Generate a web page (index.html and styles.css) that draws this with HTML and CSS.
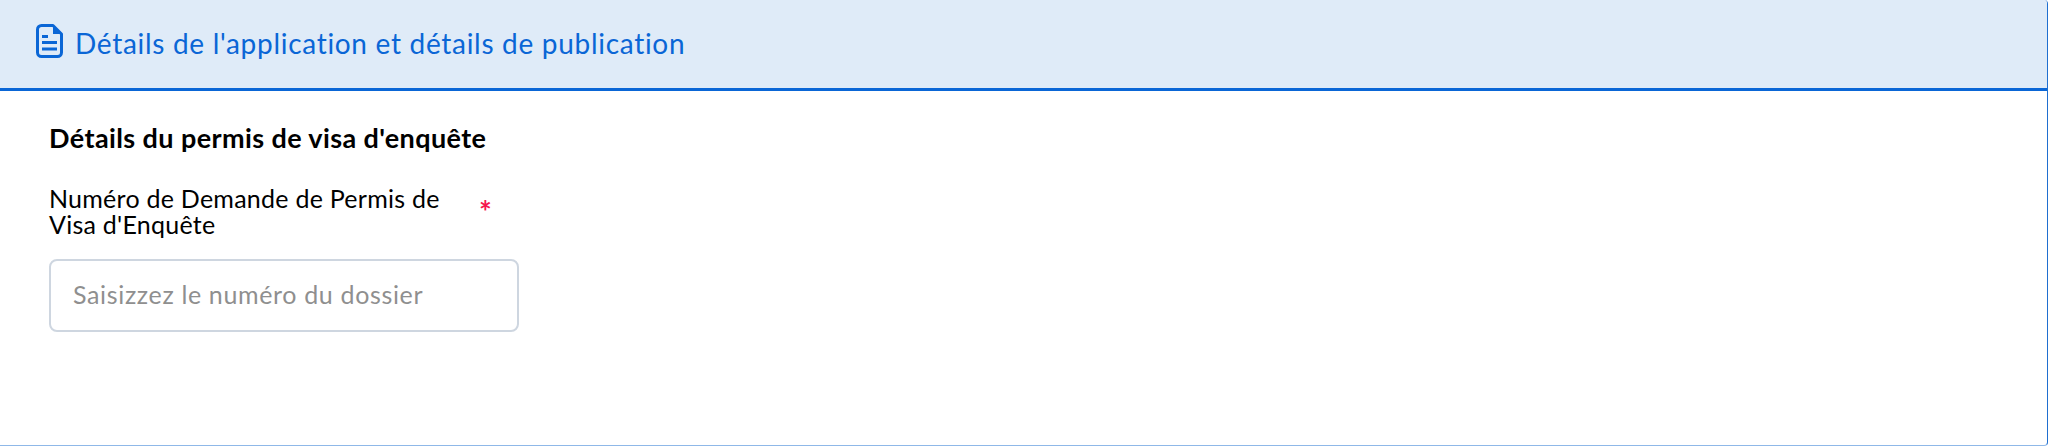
FILE: index.html
```html
<!DOCTYPE html>
<html lang="fr">
<head>
<meta charset="utf-8">
<title>Détails de l'application</title>
<link rel="stylesheet" href="styles.css">
</head>
<body>
<section class="panel">
  <header class="panel-head">
    <svg class="doc-icon" width="27" height="34" viewBox="0 0 27 34" fill="none">
      <path d="M5.500 1.500H17L25.500 10V28.500A4 4 0 0 1 21.500 32.500H5.500A4 4 0 0 1 1.500 28.500V5.500A4 4 0 0 1 5.500 1.500Z" stroke="#0a66d6" stroke-width="3" stroke-linejoin="round"/>
      <path d="M17 2V10H25Z" fill="#0a66d6"/>
      <path d="M6 12.500H12M6 18.500H21M6 25H21" stroke="#0a66d6" stroke-width="3"/>
    </svg>
    <h1 class="panel-title">Détails de l'application et détails de publication</h1>
  </header>
  <div class="panel-body">
    <h2 class="section-title">Détails du permis de visa d'enquête</h2>
    <div class="label-row">
      <label class="field-label" for="num">Numéro de Demande de Permis de Visa d'Enquête</label>
      <span class="required">*</span>
    </div>
    <input class="field-input" id="num" type="text" placeholder="Saisizzez le numéro du dossier">
  </div>
</section>
</body>
</html>
```
FILE: styles.css
```css
* { box-sizing: border-box; }
html, body { margin: 0; height: 100%; }
body { font-family: "Lato", "Open Sans", sans-serif; background: #fff; color: #000; }
.panel {
  height: 446px;
  display: flex;
  flex-direction: column;
  border-right: 1px solid #1f6fd0;
  border-bottom: 1px solid #8fb8e8;
  border-radius: 0 4px 4px 0;
  overflow: hidden;
}
.panel-head {
  height: 91px;
  flex: none;
  display: flex;
  align-items: center;
  gap: 12px;
  padding: 0 0 3px 36px;
  background: #dfebf8;
  border-bottom: 3px solid #0a66d6;
}
.doc-icon { flex: none; margin-top: -4px; }
.panel-title { margin: 0; font-size: 28px; font-weight: 400; color: #0a66d6; letter-spacing: 0.7px; }
.panel-body { padding: 32px 0 0 49px; }
.section-title { margin: 0; font-size: 27px; line-height: 30px; font-weight: 700; letter-spacing: 0.4px; }
.label-row { display: flex; align-items: center; width: 470px; margin-top: 32px; }
.field-label { width: 400px; font-size: 25px; line-height: 26px; letter-spacing: 0.25px; }
.required { color: #f5174d; font-size: 30px; line-height: 30px; font-weight: 700; margin-left: 30px; }
.field-input {
  display: block;
  width: 470px;
  height: 73px;
  margin-top: 22px;
  padding: 0 22px 3px;
  border: 2px solid #ced6e0;
  border-radius: 8px;
  background: #fff;
  font: 400 25px "Lato", sans-serif;
  letter-spacing: 0.65px;
  outline: none;
}
.field-input::placeholder { color: #8f8f8f; opacity: 1; }
```
